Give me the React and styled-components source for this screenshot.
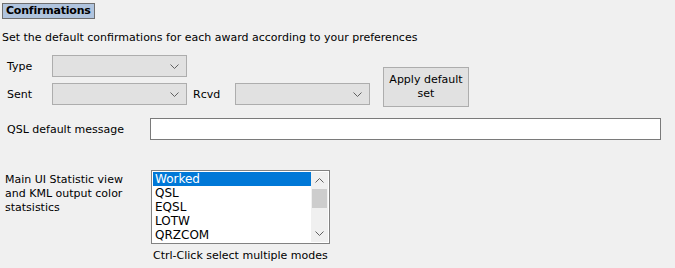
import React from "react";
import styled, { createGlobalStyle } from "styled-components";

const GlobalStyle = createGlobalStyle`
  html, body {
    margin: 0;
    padding: 0;
    background: #f0f0f0;
  }
  body {
    font-family: "DejaVu Sans", Verdana, sans-serif;
    font-size: 11px;
    color: #000;
  }
`;

const Page = styled.div`
  width: 675px;
  height: 268px;
  padding: 3px 0 0 2px;
  box-sizing: border-box;
  overflow: hidden;
`;

const Title = styled.div`
  display: inline-block;
  background: #b0c4de;
  border: 1px solid #6f6f6f;
  font-weight: bold;
  font-size: 11px;
  letter-spacing: -0.2px;
  line-height: 14px;
  padding: 0 3px 0 3px;
`;

const Intro = styled.div`
  margin-top: 12px;
  line-height: 14px;
`;

const FormBlock = styled.div`
  display: flex;
  align-items: flex-start;
  margin-top: 10px;
  padding-left: 5px;
`;

const Rows = styled.div`
  display: flex;
  flex-direction: column;
  gap: 6px;
`;

const Row = styled.div`
  display: flex;
  align-items: center;
`;

const Label = styled.span`
  width: ${(p) => p.$w || 45}px;
  flex: none;
`;

const Combo = styled.div`
  width: 135px;
  height: 22px;
  background: #e1e1e1;
  border: 1px solid #adadad;
  display: flex;
  align-items: center;
  justify-content: flex-end;
  padding-right: 7px;
  box-sizing: border-box;
  margin-right: ${(p) => (p.$last ? 0 : 6)}px;
`;

const Chevron = () => (
  <svg width="9" height="5" viewBox="0 0 9 5">
    <path d="M0.5 0.5 L4.5 4.5 L8.5 0.5" fill="none" stroke="#606060" strokeWidth="1" />
  </svg>
);

const ApplyButton = styled.div`
  width: 86px;
  height: 40px;
  box-sizing: border-box;
  margin: 12px 0 0 13px;
  background: #e1e1e1;
  border: 1px solid #adadad;
  display: flex;
  align-items: center;
  justify-content: center;
  text-align: center;
  line-height: 14px;
`;

const MessageRow = styled.div`
  display: flex;
  align-items: center;
  margin-top: 11px;
  padding-left: 5px;
`;

const TextBox = styled.div`
  width: 511px;
  height: 22px;
  box-sizing: border-box;
  background: #fff;
  border: 1px solid #7a7a7a;
`;

const StatBlock = styled.div`
  display: flex;
  align-items: flex-start;
  margin-top: 30px;
  padding-left: 3px;
`;

const StatLabel = styled.div`
  width: 146px;
  line-height: 14px;
  padding-top: 3px;
`;

const ListBox = styled.div`
  width: 179px;
  height: 74px;
  border: 1px solid #828282;
  background: #fff;
  display: flex;
  padding: 1px;
  box-sizing: border-box;
`;

const Items = styled.div`
  flex: 1;
  display: flex;
  flex-direction: column;
  font-size: 12px;
`;

const Item = styled.div`
  height: 14px;
  line-height: 14px;
  padding-left: 2px;
  background: ${(p) => (p.$selected ? "#0078d7" : "transparent")};
  color: ${(p) => (p.$selected ? "#fff" : "#000")};
`;

const ScrollBar = styled.div`
  width: 17px;
  display: flex;
  flex-direction: column;
  align-items: center;
  background: #f0f0f0;
`;

const ScrollArrow = styled.div`
  height: 17px;
  display: flex;
  align-items: center;
  justify-content: center;
`;

const Thumb = styled.div`
  width: 15px;
  height: 19px;
  background: #cdcdcd;
`;

const Spacer = styled.div`
  flex: 1;
`;

const Hint = styled.div`
  margin: 5px 0 0 151px;
  line-height: 14px;
`;

const items = ["Worked", "QSL", "EQSL", "LOTW", "QRZCOM"];

export default function App() {
  return (
    <>
      <GlobalStyle />
      <Page>
        <Title>Confirmations</Title>
        <Intro>Set the default confirmations for each award according to your preferences</Intro>
        <FormBlock>
          <Rows>
            <Row>
              <Label>Type</Label>
              <Combo><Chevron /></Combo>
            </Row>
            <Row>
              <Label>Sent</Label>
              <Combo><Chevron /></Combo>
              <Label $w={42}>Rcvd</Label>
              <Combo $last><Chevron /></Combo>
            </Row>
          </Rows>
          <ApplyButton>Apply default<br />set</ApplyButton>
        </FormBlock>
        <MessageRow>
          <Label $w={143}>QSL default message</Label>
          <TextBox />
        </MessageRow>
        <StatBlock>
          <StatLabel>
            Main UI Statistic view<br />and KML output color<br />statsistics
          </StatLabel>
          <div>
            <ListBox>
              <Items>
                {items.map((it, i) => (
                  <Item key={it} $selected={i === 0}>{it}</Item>
                ))}
              </Items>
              <ScrollBar>
                <ScrollArrow>
                  <svg width="9" height="5" viewBox="0 0 9 5">
                    <path d="M0.5 4.5 L4.5 0.5 L8.5 4.5" fill="none" stroke="#606060" />
                  </svg>
                </ScrollArrow>
                <Thumb />
                <Spacer />
                <ScrollArrow>
                  <svg width="9" height="5" viewBox="0 0 9 5">
                    <path d="M0.5 0.5 L4.5 4.5 L8.5 0.5" fill="none" stroke="#606060" />
                  </svg>
                </ScrollArrow>
              </ScrollBar>
            </ListBox>
          </div>
        </StatBlock>
        <Hint>Ctrl-Click select multiple modes</Hint>
      </Page>
    </>
  );
}
